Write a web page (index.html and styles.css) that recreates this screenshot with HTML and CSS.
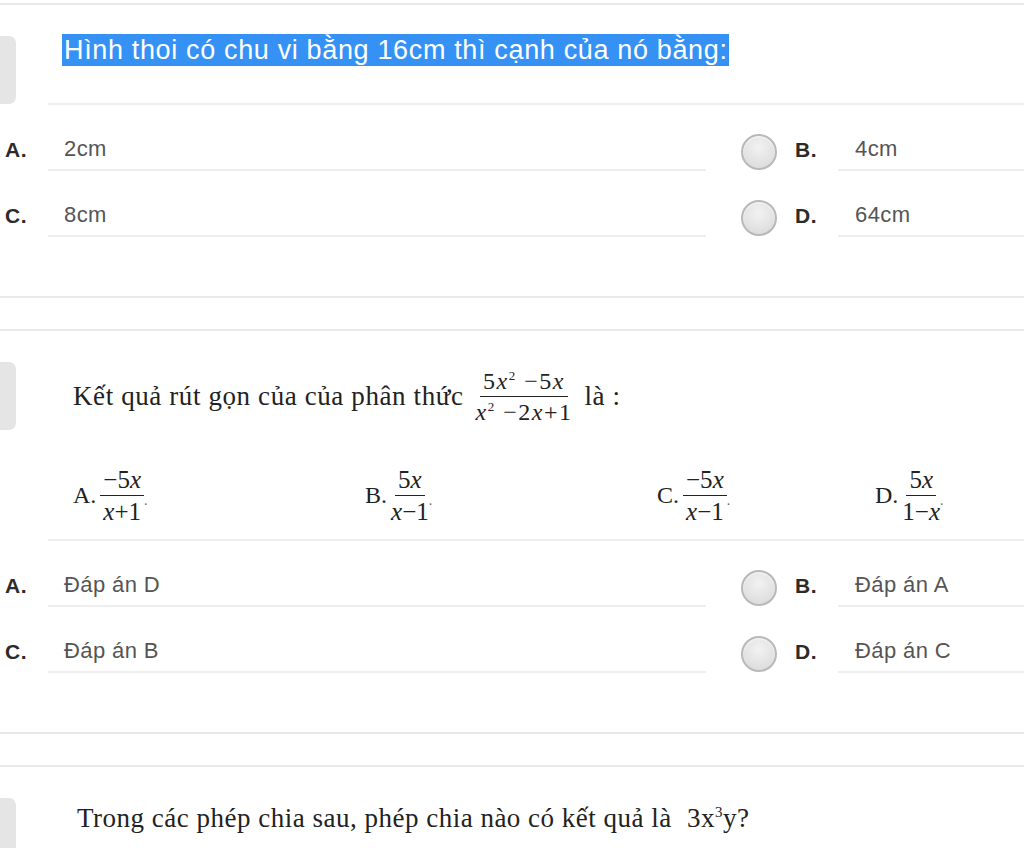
FILE: index.html
```html
<!DOCTYPE html>
<html lang="vi">
<head>
<meta charset="utf-8">
<link rel="stylesheet" href="styles.css">
</head>
<body>
<div class="page">
  <div class="top-gap"></div>
  <div class="sep"></div>

  <section class="question">
    <div class="q-head">
      <div class="tab"></div>
      <div class="q-content q1">
        <span class="hl">Hình thoi có chu vi bằng 16cm thì cạnh của nó bằng:</span>
      </div>
    </div>
    <div class="opt-row">
      <div class="lbl-l">A.</div>
      <div class="ans ans-l">2cm</div>
      <div class="radio-cell"><span class="radio"></span></div>
      <div class="lbl-r">B.</div>
      <div class="ans ans-r">4cm</div>
    </div>
    <div class="opt-row">
      <div class="lbl-l">C.</div>
      <div class="ans ans-l">8cm</div>
      <div class="radio-cell"><span class="radio"></span></div>
      <div class="lbl-r">D.</div>
      <div class="ans ans-r">64cm</div>
    </div>
  </section>

  <div class="sec-gap"></div>
  <div class="sep"></div>
  <div class="mid-gap"></div>
  <div class="sep"></div>

  <section class="question">
    <div class="q-head">
      <div class="tab"></div>
      <div class="q-content q2">
        <div class="q2-line">
          <span>Kết quả rút gọn của của phân thức</span>
          <span class="frac big"><span class="num">5<i>x</i><sup>2</sup> −5<i>x</i></span><span class="den"><i>x</i><sup>2</sup> −2<i>x</i>+1</span></span>
          <span>là :</span>
        </div>
        <div class="math-opts">
          <div class="mo">A.<span class="frac"><span class="num">−5<i>x</i></span><span class="den"><i>x</i>+1</span></span><span class="dot">.</span></div>
          <div class="mo">B.<span class="frac"><span class="num">5<i>x</i></span><span class="den"><i>x</i>−1</span></span><span class="dot">.</span></div>
          <div class="mo">C.<span class="frac"><span class="num">−5<i>x</i></span><span class="den"><i>x</i>−1</span></span><span class="dot">.</span></div>
          <div class="mo">D.<span class="frac"><span class="num">5<i>x</i></span><span class="den">1−<i>x</i></span></span><span class="dot">.</span></div>
        </div>
      </div>
    </div>
    <div class="opt-row">
      <div class="lbl-l">A.</div>
      <div class="ans ans-l">Đáp án D</div>
      <div class="radio-cell"><span class="radio"></span></div>
      <div class="lbl-r">B.</div>
      <div class="ans ans-r">Đáp án A</div>
    </div>
    <div class="opt-row">
      <div class="lbl-l">C.</div>
      <div class="ans ans-l">Đáp án B</div>
      <div class="radio-cell"><span class="radio"></span></div>
      <div class="lbl-r">D.</div>
      <div class="ans ans-r">Đáp án C</div>
    </div>
  </section>

  <div class="sec-gap"></div>
  <div class="sep"></div>
  <div class="mid-gap"></div>
  <div class="sep"></div>

  <section class="question">
    <div class="q-head last">
      <div class="tab"></div>
      <div class="q-content q3">
        <span>Trong các phép chia sau, phép chia nào có kết quả là </span><span class="mono">3x<sup>3</sup>y?</span>
      </div>
    </div>
  </section>
</div>
</body>
</html>
```

FILE: styles.css
```css
* { box-sizing: border-box; }
html, body { margin: 0; padding: 0; background: #fff; }
body { font-family: "Liberation Sans", Arial, sans-serif; color: #333; overflow: hidden; }
.page { width: 1024px; height: 848px; overflow: hidden; }

.top-gap { height: 3px; }
.sep { height: 2px; background: #e9e9e9; }
.sec-gap { height: 59px; }
.mid-gap { height: 31px; }

.q-head { display: flex; align-items: flex-start; }
.tab {
  width: 16px; height: 68px; margin-top: 31px;
  background: #e5e5e5; border-radius: 0 7px 7px 0;
  flex: none;
}
.q-content {
  margin-left: 32px; flex: 1;
  border-bottom: 2px solid #eeeeee;
}
.q1 { height: 100px; padding-top: 29px; padding-left: 14px; }
.hl {
  display: inline-block;
  background: #3592f4; color: #fff;
  font-size: 27px; letter-spacing: 0.65px;
  line-height: 32px; padding: 0 1px 0 2px;
}

.opt-row { display: flex; align-items: flex-end; height: 66px; }
.lbl-l, .lbl-r {
  font-weight: bold; font-size: 21px; letter-spacing: 0.5px; color: #2b2b2b;
  height: 44px; line-height: 46px;
}
.lbl-l { width: 48px; padding-left: 5px; }
.lbl-r { width: 43px; }
.ans {
  height: 44px; line-height: 44px;
  border-bottom: 2px solid #eeeeee;
  font-size: 22px; letter-spacing: 0.4px; color: #555;
  padding-left: 16px;
}
.ans-l { width: 658px; }
.ans-r { flex: 1; padding-left: 17px; }
.radio-cell { width: 89px; height: 44px; display: flex; align-items: center; padding-left: 35px; }
.radio {
  width: 36px; height: 36px; border-radius: 50%;
  border: 2px solid #b9b9b9;
  background: radial-gradient(circle at 50% 35%, #f2f2f2 0%, #e2e2e2 60%, #d6d6d6 100%);
  box-shadow: inset 0 1px 2px rgba(255,255,255,0.8);
  margin-top: 5px;
}

.q2, .q3 { font-family: "Liberation Serif", "Times New Roman", serif; color: #222; }
.q2 { height: 210px; padding-left: 25px; }
.q2-line {
  display: flex; align-items: center; height: 60px; margin-top: 35px;
  font-size: 27px; letter-spacing: 0.6px; gap: 12px;
}
.frac {
  display: inline-flex; flex-direction: column; align-items: center;
  font-size: 24px; letter-spacing: 0; line-height: 1;
}
.frac .num { border-bottom: 1.5px solid #222; padding: 0 3px 3px; }
.frac .den { padding-top: 3px; }
.frac sup { font-size: 13px; vertical-align: 9px; line-height: 0; }
.frac.big { font-size: 24px; letter-spacing: 1.5px; }
.frac.big .num { padding: 0 3px 3px; }

.math-opts {
  display: grid; grid-template-columns: 292px 292px 218px 1fr;
  margin-top: 38px; height: 62px;
}
.mo { display: flex; align-items: center; font-size: 24px; }
.mo .frac { margin-left: 4px; font-size: 25px; }
.mo .dot { font-size: 14px; align-self: center; margin-top: 12px; color: #666; }

.q-head.last .q-content { border-bottom: none; }
.q3 { height: 90px; padding-left: 29px; padding-top: 36px; font-size: 27px; letter-spacing: 0.5px; }
.q3 .mono { margin-left: 8px; }
.q3 sup { font-size: 15px; vertical-align: 10px; line-height: 0; }
```
